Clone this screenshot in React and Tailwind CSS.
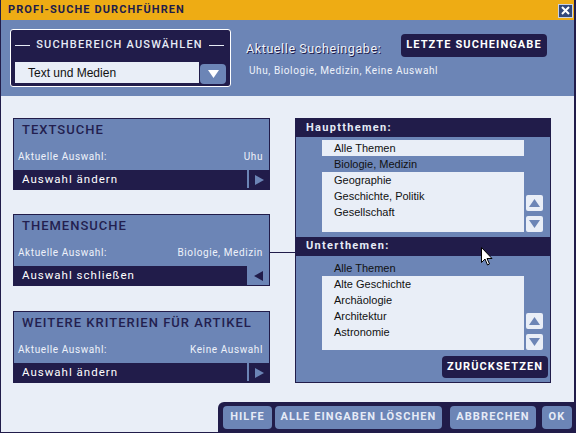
import React from "react";

const Tri = ({ dir = "right", className = "" }) => {
  const pts = {
    right: "0,0 9,5 0,10",
    left: "9,0 0,5 9,10",
    up: "0,8 5.5,0 11,8",
    down: "0,0 11,0 5.5,8",
  }[dir];
  const vb = dir === "up" || dir === "down" ? "0 0 11 8" : "0 0 9 10";
  const w = dir === "up" || dir === "down" ? 11 : 9;
  const h = dir === "up" || dir === "down" ? 8 : 10;
  return (
    <svg width={w} height={h} viewBox={vb} className={className}>
      <polygon points={pts} fill="currentColor" />
    </svg>
  );
};

function SidePanel({ title, value, action, open }) {
  return (
    <div className="w-[257px] h-[72px] border border-[#211c4a] bg-[#6c85b6] flex flex-col">
      <div className="h-[51px] flex flex-col">
        <div className="pt-[3px] pl-[8px] text-[13px] leading-[16px] font-medium tracking-[1px] text-[#231f4f] font-['Roboto',sans-serif]">
          {title}
        </div>
        <div className="mt-auto pb-[6px] pl-[4px] pr-[6px] flex justify-between text-[10px] leading-[14px] tracking-[0.6px] text-[#eef2fa] font-['Roboto',sans-serif]">
          <span>Aktuelle Auswahl:</span>
          <span>{value}</span>
        </div>
      </div>
      <div className="h-[19px] bg-[#211c4a] flex items-center">
        <div className="flex-1 pl-[8px] text-[11.5px] tracking-[1px] text-white font-['Roboto',sans-serif]">
          {action}
        </div>
        {open ? (
          <div className="w-[22px] self-stretch bg-[#6c85b6] flex items-center justify-center text-[#211c4a]">
            <Tri dir="left" />
          </div>
        ) : (
          <>
            <div className="w-[2px] self-stretch mb-[1px] bg-[#6c85b6]" />
            <div className="w-[20px] self-stretch flex items-center justify-center text-[#6c85b6]">
              <Tri dir="right" />
            </div>
          </>
        )}
      </div>
    </div>
  );
}

function ScrollBtns() {
  return (
    <div className="self-end flex flex-col gap-[5px] ml-[2px]">
      <div className="w-[17px] h-[16px] rounded-[2px] bg-[#e9eef7] flex items-center justify-center text-[#6c85b6]">
        <Tri dir="up" />
      </div>
      <div className="w-[17px] h-[16px] rounded-[2px] bg-[#e9eef7] flex items-center justify-center text-[#6c85b6]">
        <Tri dir="down" />
      </div>
    </div>
  );
}

function ListBox({ items, selected, height }) {
  return (
    <div className="flex ml-[26px]">
      <div className={`w-[202px] ${height} bg-[#e9eef7] flex flex-col`}>
        {items.map((it, i) => (
          <div
            key={it}
            className={`h-[16px] pl-[12px] flex items-center text-[11px] text-[#111] font-['Liberation_Sans',Arial,sans-serif] ${
              i === selected ? "bg-[#6c85b6]" : ""
            }`}
          >
            {it}
          </div>
        ))}
      </div>
      <ScrollBtns />
    </div>
  );
}

export default function App() {
  return (
    <div className="relative w-[576px] h-[433px] flex flex-col bg-[#e9eef7] border-l border-r-2 border-b border-[#211c4a] overflow-hidden font-['Roboto',sans-serif]">
      {/* title bar */}
      <div className="h-[20px] shrink-0 bg-[#eeac14] flex items-center justify-between pl-[7px]">
        <span className="text-[11px] font-bold tracking-[1.1px] text-[#211c4a] pt-[1px]">
          PROFI-SUCHE DURCHFÜHREN
        </span>
        <div className="w-[15px] h-[14px] mr-[1px] mt-[1px] bg-[#33487a] border border-[#c9d1e3] flex items-center justify-center">
          <svg width="9" height="9" viewBox="0 0 9 9">
            <path d="M1 1 L8 8 M8 1 L1 8" stroke="white" strokeWidth="2" />
          </svg>
        </div>
      </div>

      {/* top section */}
      <div className="h-[76px] shrink-0 bg-[#6c85b6] flex pl-[9px] pt-[9px]">
        <div className="w-[221px] h-[58px] rounded-[3px] border border-white bg-[#211c4a] flex flex-col pl-[4px]">
          <div className="h-[30px] mr-[6px] flex items-center gap-[6px]">
            <div className="flex-1 h-px bg-[#e6ebf6]" />
            <span className="whitespace-nowrap text-[11px] tracking-[1.2px] text-[#e6ebf6] font-medium">
              SUCHBEREICH AUSWÄHLEN
            </span>
            <div className="flex-1 h-px bg-[#e6ebf6]" />
          </div>
          <div className="flex items-start mt-[2px]">
            <div className="w-[184px] h-[21px] bg-[#e9eef7] pl-[13px] flex items-center text-[12px] text-[#111] font-['Liberation_Sans',Arial,sans-serif]">
              Text und Medien
            </div>
            <div className="w-[26px] h-[20px] mt-[2px] ml-px rounded-[4px] bg-[#6c85b6] flex items-center justify-center text-white">
              <Tri dir="down" />
            </div>
          </div>
        </div>
        <div className="ml-[15px] flex flex-col">
          <div className="mt-[5px] h-[23px] flex items-end">
            <div className="w-[155px] text-[12.5px] leading-[16px] tracking-[0.6px] text-[#eef2fa] [text-shadow:1px_1px_0_#211c4a]">
              Aktuelle Sucheingabe:
            </div>
            <div className="self-stretch w-[146px] rounded-[4px] bg-[#211c4a] flex items-center justify-center text-[11px] font-bold tracking-[1.1px] text-white">
              LETZTE SUCHEINGABE
            </div>
          </div>
          <div className="mt-[7px] pl-[3px] text-[10px] leading-[14px] tracking-[0.6px] text-[#eef2fa]">
            Uhu, Biologie, Medizin, Keine Auswahl
          </div>
        </div>
      </div>

      {/* main area */}
      <div className="flex-1 flex flex-col">
        <div className="flex pl-[12px] pt-[22px]">
          <div className="flex flex-col">
            <SidePanel title="TEXTSUCHE" value="Uhu" action="Auswahl ändern" />
            <div className="h-[24px]" />
            <SidePanel title="THEMENSUCHE" value="Biologie, Medizin" action="Auswahl schließen" open />
            <div className="h-[25px]" />
            <SidePanel title="WEITERE KRITERIEN FÜR ARTIKEL" value="Keine Auswahl" action="Auswahl ändern" />
          </div>
          <div className="w-[25px]">
            <div className="mt-[134px] h-px bg-[#211c4a]" />
          </div>
          <div className="w-[256px] h-[265px] border border-[#211c4a] bg-[#6c85b6] flex flex-col">
            <div className="h-[18px] bg-[#211c4a] pl-[10px] flex items-center text-[11px] font-bold tracking-[1.3px] text-[#e6ebf6]">
              Hauptthemen:
            </div>
            <div className="mt-[3px]">
              <ListBox
                items={["Alle Themen", "Biologie, Medizin", "Geographie", "Geschichte, Politik", "Gesellschaft"]}
                selected={1}
                height="h-[92px]"
              />
            </div>
            <div className="mt-[5px] h-[19px] bg-[#211c4a] pl-[10px] flex items-center text-[11px] font-bold tracking-[1.3px] text-[#e6ebf6]">
              Unterthemen:
            </div>
            <div className="mt-[4px]">
              <ListBox
                items={["Alle Themen", "Alte Geschichte", "Archäologie", "Architektur", "Astronomie"]}
                selected={0}
                height="h-[90px]"
              />
            </div>
            <div className="mt-[6px] self-end mr-[2px] w-[106px] h-[22px] rounded-[4px] bg-[#211c4a] flex items-center justify-center text-[11px] font-bold tracking-[1.1px] text-white">
              ZURÜCKSETZEN
            </div>
          </div>
        </div>

        {/* bottom bar */}
        <div className="mt-auto self-end w-[356px] h-[30px] rounded-tl-[6px] bg-[#211c4a] flex items-start pt-[4px] pl-[5px] text-[11px] font-bold tracking-[1.1px] text-[#e6ebf6]">
          <div className="w-[49px] h-[23px] rounded-[4px] bg-[#6c85b6] flex items-center justify-center">HILFE</div>
          <div className="ml-[3px] w-[167px] h-[23px] rounded-[4px] bg-[#6c85b6] flex items-center justify-center">ALLE EINGABEN LÖSCHEN</div>
          <div className="ml-[8px] w-[86px] h-[23px] rounded-[4px] bg-[#6c85b6] flex items-center justify-center">ABBRECHEN</div>
          <div className="ml-[6px] w-[30px] h-[23px] rounded-[4px] bg-[#6c85b6] flex items-center justify-center">OK</div>
        </div>
      </div>

      {/* mouse cursor */}
      <svg className="absolute left-[480px] top-[247px]" width="12" height="19" viewBox="0 0 12 19">
        <path d="M0.5 0.5 L0.5 15.5 L4 12 L6.5 18 L8.5 17 L6 11.5 L11 11.5 Z" fill="white" stroke="black" strokeWidth="1" />
      </svg>
    </div>
  );
}
